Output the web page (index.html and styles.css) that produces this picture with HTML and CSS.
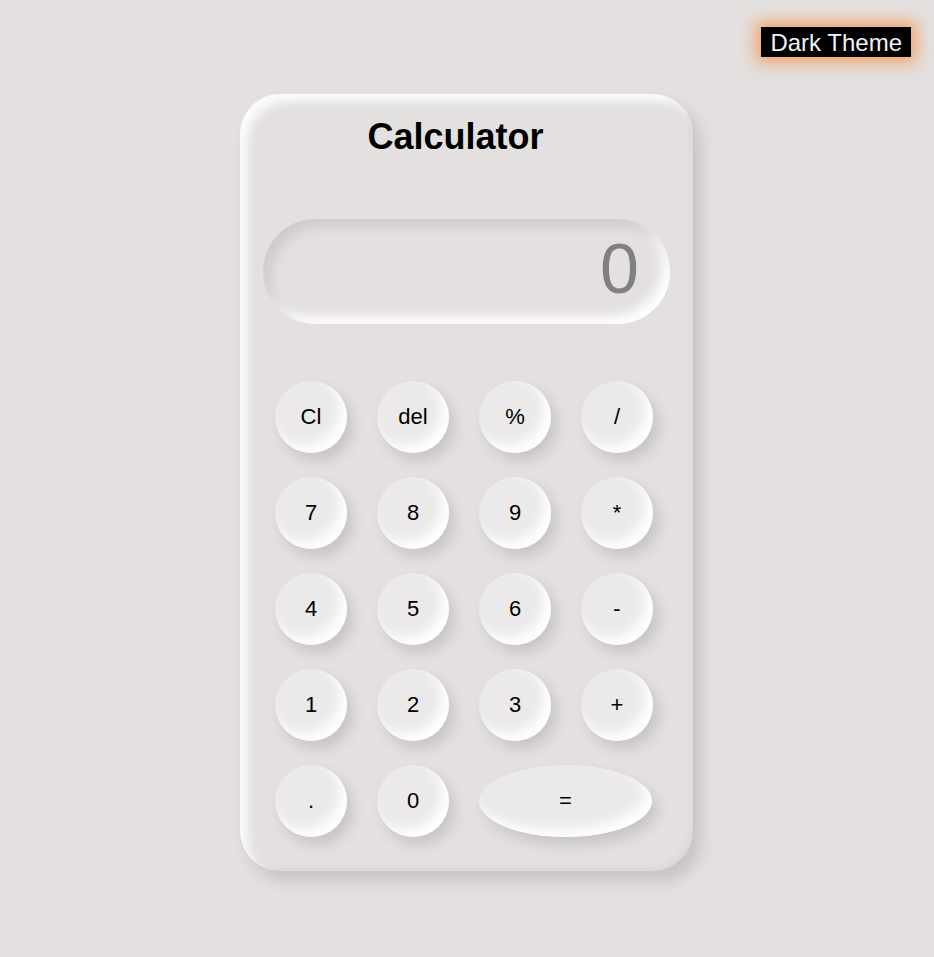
FILE: index.html
```html
<!DOCTYPE html>
<html lang="en">
<head>
<meta charset="utf-8">
<title>Calculator</title>
<link rel="stylesheet" href="styles.css">
</head>
<body>
<header class="topbar">
  <button class="theme-btn" type="button">Dark Theme</button>
</header>
<main class="calc">
  <h1 class="calc-title">Calculator</h1>
  <div class="display">0</div>
  <div class="keys">
    <button class="key">Cl</button>
    <button class="key">del</button>
    <button class="key">%</button>
    <button class="key">/</button>
    <button class="key">7</button>
    <button class="key">8</button>
    <button class="key">9</button>
    <button class="key">*</button>
    <button class="key">4</button>
    <button class="key">5</button>
    <button class="key">6</button>
    <button class="key">-</button>
    <button class="key">1</button>
    <button class="key">2</button>
    <button class="key">3</button>
    <button class="key">+</button>
    <button class="key">.</button>
    <button class="key">0</button>
    <button class="key key-wide">=</button>
  </div>
</main>
</body>
</html>
```

FILE: styles.css
```css
* { box-sizing: border-box; }

html, body {
  margin: 0;
  padding: 0;
}

body {
  background: #e3e0df;
  font-family: "Liberation Sans", Arial, sans-serif;
  color: #000;
  min-height: 957px;
  padding-right: 1px;
}

.topbar {
  display: flex;
  justify-content: flex-end;
  padding: 27px 22px 0 0;
}

.theme-btn {
  font-family: "Liberation Sans", Arial, sans-serif;
  font-size: 24px;
  line-height: 31px;
  height: 30px;
  padding: 0 9px;
  border: none;
  background: #000;
  color: #eef2f7;
  box-shadow: 0 0 16px 5px rgba(245, 140, 60, 0.75);
}

.calc {
  width: 453px;
  margin: 37px auto 0;
  padding: 23px 23px 34px;
  border-radius: 40px;
  background: #e3e0df;
  box-shadow:
    8px 10px 16px rgba(0, 0, 0, 0.13),
    inset 8px 8px 10px rgba(255, 255, 255, 0.85),
    inset -3px -3px 6px rgba(0, 0, 0, 0.04);
}

.calc-title {
  margin: 0 22px 0 0;
  font-size: 36px;
  font-weight: bold;
  text-align: center;
  line-height: 40px;
}

.display {
  margin-top: 62px;
  height: 105px;
  border-radius: 52px;
  padding: 10px 31px 0;
  text-align: right;
  font-size: 70px;
  line-height: 80px;
  color: #808080;
  background: #e3e0df;
  box-shadow:
    inset 8px 8px 12px rgba(0, 0, 0, 0.09),
    inset -8px -8px 12px rgba(255, 255, 255, 0.95);
}

.keys {
  margin-top: 57px;
  padding-left: 12px;
  display: grid;
  grid-template-columns: repeat(4, 72px);
  grid-auto-rows: 72px;
  column-gap: 30px;
  row-gap: 24px;
}

.key {
  width: 72px;
  height: 72px;
  border: none;
  border-radius: 50%;
  font-family: "Liberation Sans", Arial, sans-serif;
  font-size: 22px;
  color: #000;
  background: #ebe9e9;
  box-shadow:
    6px 8px 14px rgba(0, 0, 0, 0.12),
    inset -8px -8px 12px rgba(255, 255, 255, 0.95);
  padding: 0;
}

.key-wide {
  grid-column: span 2;
  width: 173px;
}
```
